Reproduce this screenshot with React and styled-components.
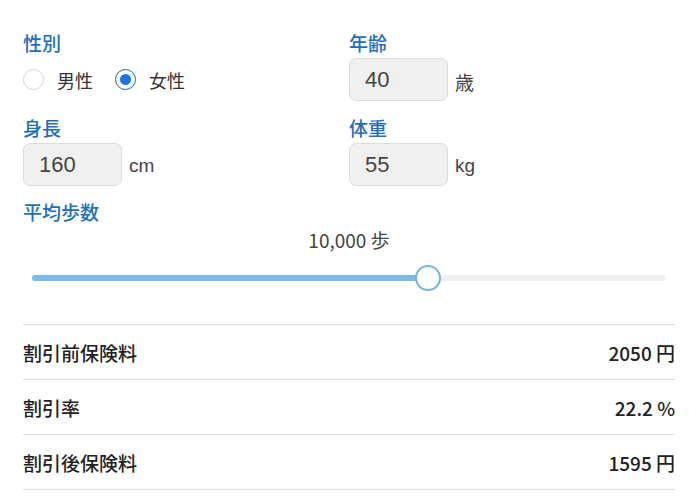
import React from 'react';
import styled, { createGlobalStyle } from 'styled-components';

const GlobalStyle = createGlobalStyle`
    body {
        margin: 0;
        background: #fff;
        font-family: "Noto Sans CJK JP", "Noto Sans", sans-serif;
        color: #333;
    }
`;

const Page = styled.div`
    width: 652px;
    padding: 30px 25px 0 23px;
`;

const FormGrid = styled.div`
    display: grid;
    grid-template-columns: 326px 326px;
    row-gap: 14px;
`;

const Field = styled.div`
    display: flex;
    flex-direction: column;
`;

const Label = styled.div`
    font-size: 19px;
    font-weight: 500;
    line-height: 26px;
    color: #1f6ebf;
    margin-bottom: 2px;
`;

const ControlRow = styled.div`
    display: flex;
    align-items: center;
    height: 43px;
`;

const RadioOption = styled.label`
    display: flex;
    align-items: center;
    margin-right: 22px;
    font-size: 18px;
    color: #333;
`;

const RadioCircle = styled.span`
    box-sizing: border-box;
    width: 21px;
    height: 21px;
    border-radius: 50%;
    border: ${(p) => (p.checked ? '1.5px solid #1b5fbf' : '1px solid #d4d4d4')};
    margin-right: 13px;
    display: flex;
    align-items: center;
    justify-content: center;

    &::after {
        content: '';
        display: ${(p) => (p.checked ? 'block' : 'none')};
        width: 11px;
        height: 11px;
        border-radius: 50%;
        background: #1a73e8;
    }
`;

const NumberBox = styled.div`
    box-sizing: border-box;
    width: 99px;
    height: 43px;
    border: 1px solid #dcdcdc;
    border-radius: 7px;
    background: #f0f0f0;
    padding-left: 15px;
    display: flex;
    align-items: center;
    font-family: "Liberation Sans", "Noto Sans CJK JP", sans-serif;
    font-size: 22px;
    color: #444;
`;

const Unit = styled.span`
    margin-left: 7px;
    margin-top: 3px;
    font-family: "Liberation Sans", "Noto Sans CJK JP", sans-serif;
    font-size: 19px;
    color: #444;
`;

const StepsSection = styled.div`
    margin-top: 13px;
`;

const StepsValue = styled.div`
    text-align: center;
    font-size: 19px;
    line-height: 26px;
    color: #444;
    margin-top: 2px;
`;

const SliderTrack = styled.div`
    position: relative;
    height: 6px;
    margin: 22px 9px 0 9px;
    border-radius: 3px;
    background: #f0f0f0;
`;

const SliderFill = styled.div`
    height: 100%;
    border-radius: 3px;
    background: #7db9e8;
`;

const SliderThumb = styled.div`
    position: absolute;
    top: 50%;
    box-sizing: border-box;
    width: 26px;
    height: 26px;
    margin: -13px 0 0 -13px;
    border-radius: 50%;
    background: #fff;
    border: 2.5px solid #7ab3dc;
`;

const ResultTable = styled.div`
    margin-top: 43px;
    border-bottom: 1px solid #ddd;
`;

const ResultRow = styled.div`
    display: flex;
    justify-content: space-between;
    align-items: center;
    height: 54px;
    border-top: 1px solid #ddd;
    font-size: 19px;
    font-weight: 500;
    color: #222;
`;

const Radio = ({ checked, children }) => (
    <RadioOption>
        <RadioCircle checked={checked} />
        {children}
    </RadioOption>
);

const NumberField = ({ label, value, unit }) => (
    <Field>
        <Label>{label}</Label>
        <ControlRow>
            <NumberBox>{value}</NumberBox>
            <Unit>{unit}</Unit>
        </ControlRow>
    </Field>
);

const results = [
    { name: '割引前保険料', value: '2050 円' },
    { name: '割引率', value: '22.2 %' },
    { name: '割引後保険料', value: '1595 円' },
];

const App = () => {
    const steps = 10000;
    const ratio = steps / 16000;

    return (
        <Page>
            <GlobalStyle />
            <FormGrid>
                <Field>
                    <Label>性別</Label>
                    <ControlRow>
                        <Radio checked={false}>男性</Radio>
                        <Radio checked>女性</Radio>
                    </ControlRow>
                </Field>
                <NumberField label="年齢" value="40" unit="歳" />
                <NumberField label="身長" value="160" unit="cm" />
                <NumberField label="体重" value="55" unit="kg" />
            </FormGrid>

            <StepsSection>
                <Label>平均歩数</Label>
                <StepsValue>10,000 歩</StepsValue>
                <SliderTrack>
                    <SliderFill style={{ width: `${ratio * 100}%` }} />
                    <SliderThumb style={{ left: `${ratio * 100}%` }} />
                </SliderTrack>
            </StepsSection>

            <ResultTable>
                {results.map((r) => (
                    <ResultRow key={r.name}>
                        <span>{r.name}</span>
                        <span>{r.value}</span>
                    </ResultRow>
                ))}
            </ResultTable>
        </Page>
    );
};

export default App;
